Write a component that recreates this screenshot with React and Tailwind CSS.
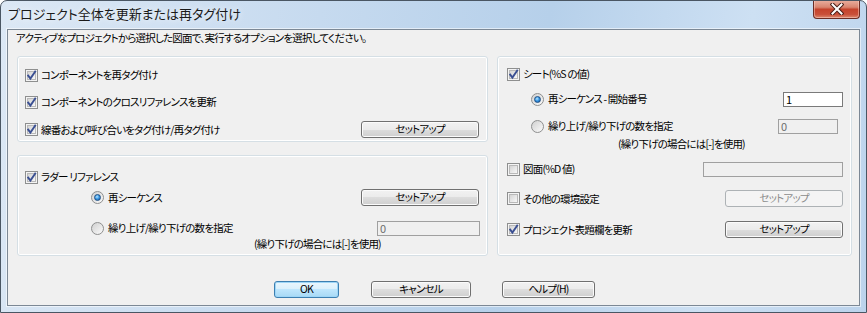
import React from "react";

const FONT = "[font-family:'Noto_Sans_CJK_JP','Noto_Sans',sans-serif] [font-feature-settings:'palt']";
const TXT = "text-[10.5px] tracking-[-0.8px]";

function Check({ checked }) {
  return (
    <span className="relative block h-[13px] w-[13px] shrink-0 border border-[#8e8f8f] bg-[#f4f4f4]">
      <span className="absolute inset-[1px] border border-[#b9b9b9] bg-[linear-gradient(135deg,#d4d4d4,#f8f8f8)]" />
      {checked && (
        <svg className="absolute left-0 top-0" width="11" height="11" viewBox="0 0 11 11">
          <path d="M2.2 5.6 L4.4 8.6 L9.2 1.6" fill="none" stroke="#3a4f92" strokeWidth="1.9" strokeLinecap="square" />
        </svg>
      )}
    </span>
  );
}

function Radio({ checked }) {
  return (
    <span className="relative block h-[13px] w-[13px] shrink-0 rounded-full border border-[#8e8f8f] bg-[linear-gradient(135deg,#d0d0d0,#fbfbfb)]">
      {checked && (
        <span className="absolute left-[2px] top-[2px] h-[7px] w-[7px] rounded-full border border-[#1d4f86] bg-[radial-gradient(circle_at_40%_35%,#b9e6ff_0%,#3c9be6_45%,#10509a_100%)]" />
      )}
    </span>
  );
}

function Btn({ children, w, disabled, focused }) {
  const base = `flex h-[17px] shrink-0 items-center justify-center rounded-[3px] border ${TXT} leading-none`;
  let cls;
  if (disabled) {
    cls = "border-[#adb2b5] bg-[#f4f4f4] text-[#8c8c8c]";
  } else if (focused) {
    cls =
      "border-[#3c7fb1] bg-[linear-gradient(#eaf6fd_0%,#d9f0fc_50%,#bee6fd_50%,#a7d9f5_100%)] text-black shadow-[inset_0_0_0_1px_#9ed6f7]";
  } else {
    cls =
      "border-[#707070] bg-[linear-gradient(#f2f2f2_0%,#ebebeb_50%,#dddddd_50%,#cfcfcf_100%)] text-black shadow-[inset_0_0_0_1px_#fbfbfb]";
  }
  return (
    <div className={`${base} ${cls}`} style={{ width: w }}>
      {children}
    </div>
  );
}

function Label({ children }) {
  return <span className={`whitespace-nowrap ${TXT} leading-[16px] text-black`}>{children}</span>;
}

function CheckRow({ checked, label }) {
  return (
    <div className="flex items-center gap-[3px]">
      <Check checked={checked} />
      <Label>{label}</Label>
    </div>
  );
}

function RadioRow({ checked, label }) {
  return (
    <div className="flex items-center gap-[4px]">
      <Radio checked={checked} />
      <Label>{label}</Label>
    </div>
  );
}

function Field({ value, w, disabled }) {
  return (
    <div
      className={`flex h-[15px] shrink-0 items-center border px-[2px] text-[11px] leading-none ${
        disabled ? "border-[#a0a0a0] bg-[#f0f0f0] text-[#6d6d6d]" : "border-[#7a7a7a] bg-white text-black"
      }`}
      style={{ width: w }}
    >
      {value}
    </div>
  );
}

const GROUP = "rounded-[3px] border border-[#d5dfe5] shadow-[inset_0_0_0_1px_#ffffff]";

export default function App() {
  return (
    <div
      className={`${FONT} flex h-[313px] w-[867px] flex-col overflow-hidden rounded-t-[7px] border border-[#4a5663] bg-[linear-gradient(100deg,#dce8f5_0%,#c6daef_35%,#b6d0ea_60%,#cde0f3_82%,#bcd3ec_100%)]`}
    >
      {/* title bar */}
      <div className="flex h-[28px] shrink-0 items-start justify-between pl-[7px] pr-[6px]">
        <span className="mt-[5px] text-[13px] leading-[16px] text-[#1a1a1a] [text-shadow:0_0_6px_rgba(255,255,255,0.95)]">
          プロジェクト全体を更新または再タグ付け
        </span>
        <div className="-mt-[1px] flex h-[19px] w-[47px] items-center justify-center rounded-b-[4px] border border-t-0 border-[#6b2d25] bg-[linear-gradient(#eab1a1_0%,#d98570_40%,#c5432c_52%,#c9503a_80%,#dc8a70_100%)] shadow-[inset_0_0_0_1px_rgba(255,220,210,0.45)]">
          <svg width="14" height="12" viewBox="0 0 14 12">
            <path d="M2.5 1.5 L11.5 10.5 M11.5 1.5 L2.5 10.5" stroke="#4a1e18" strokeWidth="4" strokeLinecap="square" />
            <path d="M2.5 1.5 L11.5 10.5 M11.5 1.5 L2.5 10.5" stroke="#ffffff" strokeWidth="2" strokeLinecap="square" />
          </svg>
        </div>
      </div>

      {/* client area */}
      <div className="mx-[6px] mb-[6px] flex flex-1 flex-col border border-[#7c8895] bg-[#f0f0f0] shadow-[0_0_0_1px_rgba(255,255,255,0.55)]">
        <div className={`h-[16px] pl-[8px] ${TXT} leading-[16px] text-black`}>
          アクティブなプロジェクトから選択した図面で、実行するオプションを選択してください。
        </div>

        <div className="mt-[10px] flex gap-[9px] pl-[9px]">
          {/* left column */}
          <div className="flex w-[471px] flex-col gap-[13px]">
            <div className={`${GROUP} flex h-[86px] flex-col pl-[7px] pr-[8px] pt-[10px]`}>
              <div className="flex h-[16px] items-center">
                <CheckRow checked label="コンポーネントを再タグ付け" />
              </div>
              <div className="mt-[11px] flex h-[16px] items-center">
                <CheckRow checked label="コンポーネントのクロスリファレンスを更新" />
              </div>
              <div className="mt-[11px] flex h-[17px] items-center justify-between">
                <CheckRow checked label="線番および呼び合いをタグ付け/再タグ付け" />
                <Btn w={118}>セットアップ</Btn>
              </div>
            </div>

            <div className={`${GROUP} flex h-[101px] flex-col pl-[7px] pt-[13px]`}>
              <div className="flex h-[16px] items-center">
                <CheckRow checked label="ラダー リファレンス" />
              </div>
              <div className="mt-[4px] flex h-[17px] items-center justify-between pl-[66px] pr-[8px]">
                <RadioRow checked label="再シーケンス" />
                <Btn w={118}>セットアップ</Btn>
              </div>
              <div className="mt-[14px] flex h-[16px] items-center justify-between pl-[66px] pr-[7px]">
                <RadioRow label="繰り上げ/繰り下げの数を指定" />
                <Field value="0" w={103} disabled />
              </div>
              <div className={`mt-[1px] h-[14px] pl-[229px] ${TXT} leading-[14px] text-black`}>
                (繰り下げの場合には[-]を使用)
              </div>
            </div>
          </div>

          {/* right column */}
          <div className={`${GROUP} flex h-[200px] w-[355px] flex-col pl-[9px] pr-[8px] pt-[9px]`}>
            <div className="flex h-[16px] items-center">
              <CheckRow checked label="シート(%S の値)" />
            </div>
            <div className="mt-[9px] flex h-[16px] items-center justify-between pl-[24px]">
              <RadioRow checked label="再シーケンス - 開始番号" />
              <Field value="1" w={60} />
            </div>
            <div className="mt-[11px] flex h-[16px] items-center justify-between pl-[24px] pr-[5px]">
              <RadioRow label="繰り上げ/繰り下げの数を指定" />
              <Field value="0" w={60} disabled />
            </div>
            <div className={`mt-[3px] h-[14px] pl-[111px] ${TXT} leading-[14px] text-black`}>
              (繰り下げの場合には[-]を使用)
            </div>
            <div className="mt-[10px] flex h-[16px] items-center justify-between">
              <CheckRow label="図面(%D 値)" />
              <Field value="" w={140} disabled />
            </div>
            <div className="mt-[13px] flex h-[17px] items-center justify-between">
              <CheckRow label="その他の環境設定" />
              <Btn w={118} disabled>
                セットアップ
              </Btn>
            </div>
            <div className="mt-[14px] flex h-[17px] items-center justify-between">
              <CheckRow checked label="プロジェクト表題欄を更新" />
              <Btn w={118}>セットアップ</Btn>
            </div>
          </div>
        </div>

        <div className="mt-[25px] flex pl-[266px]">
          <Btn w={65} focused>
            OK
          </Btn>
          <div className="ml-[32px]">
            <Btn w={100}>キャンセル</Btn>
          </div>
          <div className="ml-[31px]">
            <Btn w={93}>ヘルプ(H)</Btn>
          </div>
        </div>
      </div>
    </div>
  );
}
